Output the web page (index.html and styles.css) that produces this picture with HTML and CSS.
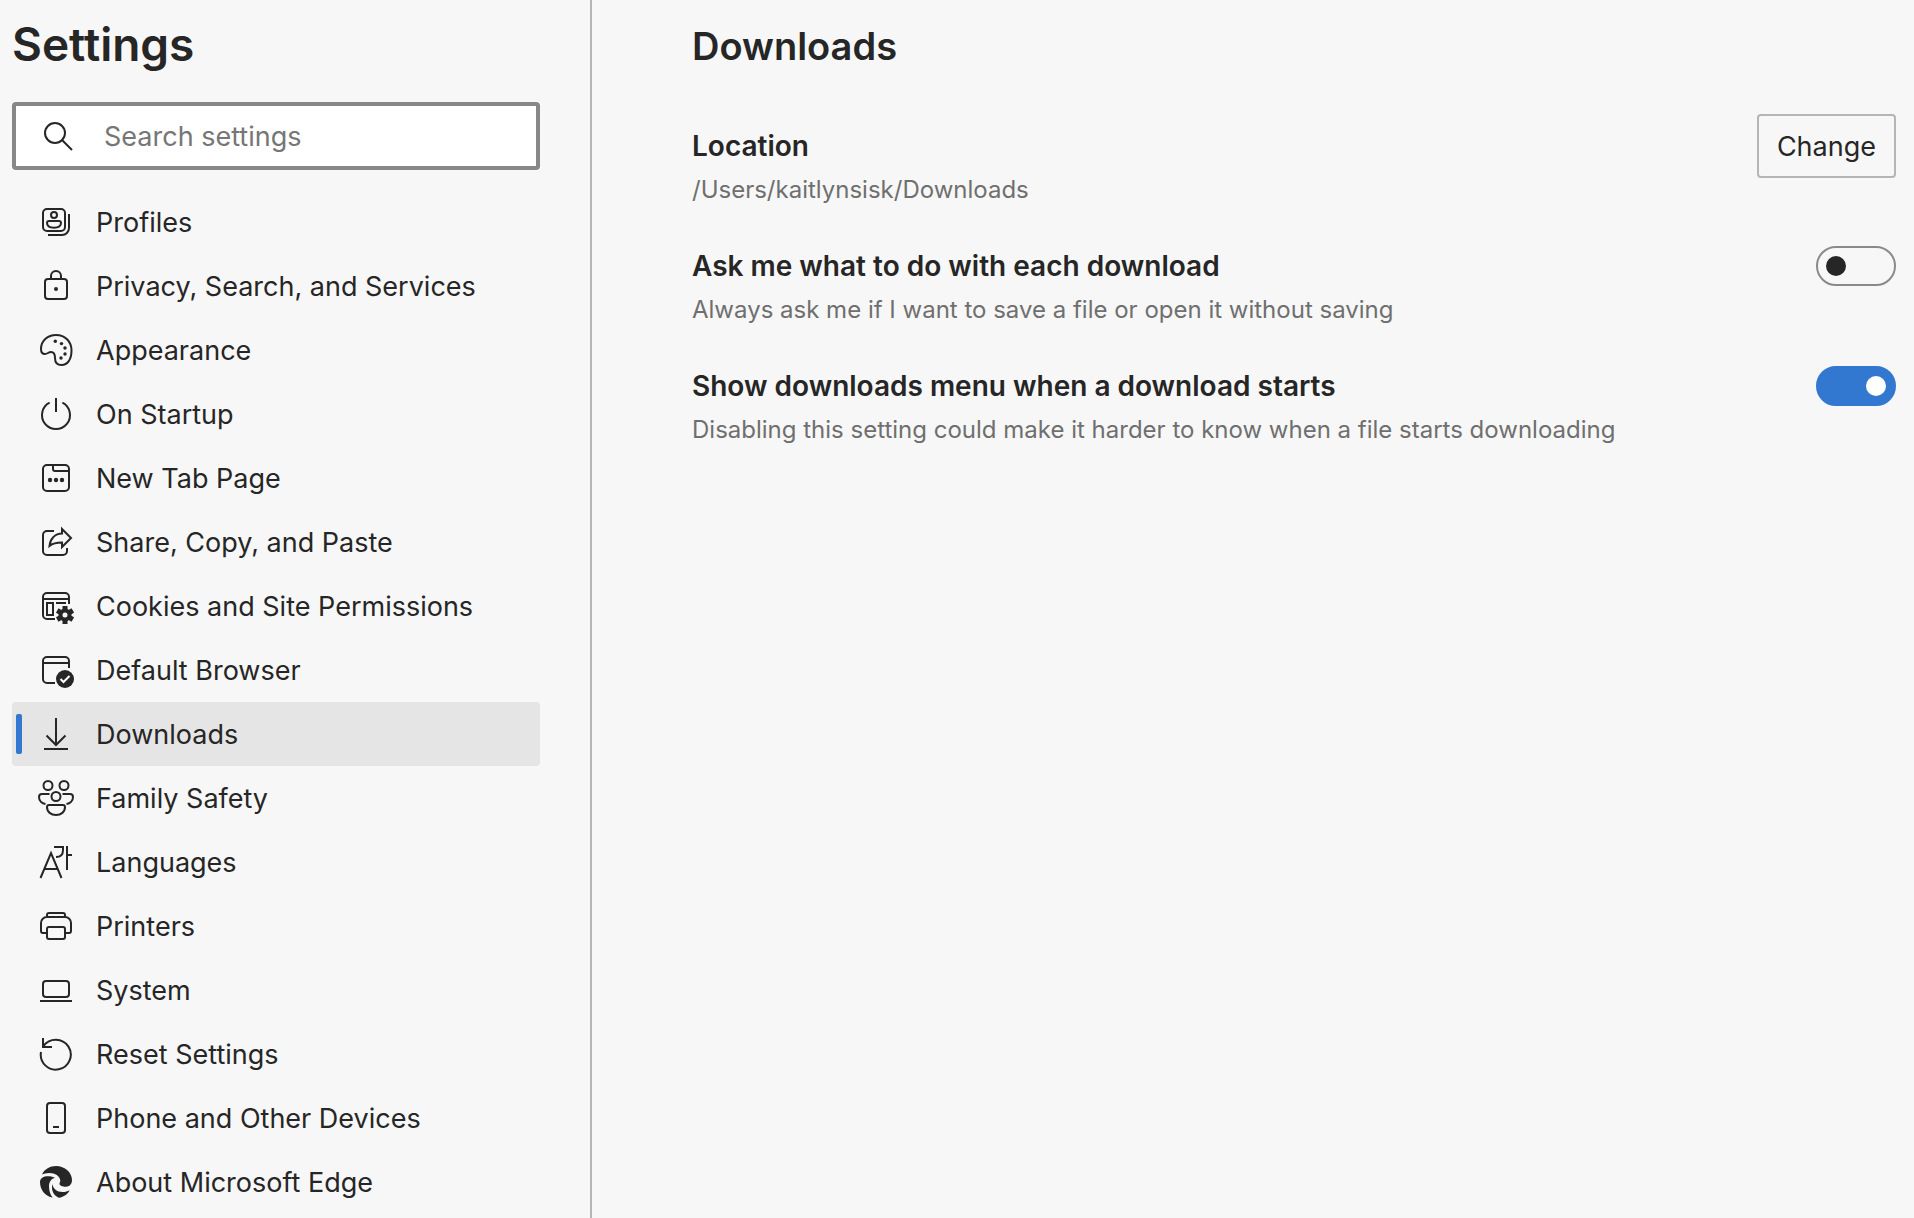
FILE: index.html
```html
<!DOCTYPE html>
<html lang="en">
<head>
    <meta charset="UTF-8">
    <meta name="viewport" content="width=device-width, initial-scale=1.0">
    <title>Settings</title>
    <link rel="stylesheet" href="styles.css">
</head>
<body>
    <div class="page">
        <aside class="sidebar">
            <h1>Settings</h1>

            <label class="search">
                <svg class="icon" viewBox="0 0 36 36"><circle cx="15" cy="15" r="10"/><path d="M22 22l10 10"/></svg>
                <input type="search" placeholder="Search settings" aria-label="Search settings">
            </label>

            <nav class="menu">
                <a href="#profiles">
                    <svg class="icon" viewBox="0 0 36 36"><rect x="5" y="5" width="22" height="22" rx="4"/><circle cx="16" cy="11" r="3"/><path d="M11 17h10a2 2 0 0 1 2 2c0 3-3 4.700-7 4.700s-7-1.700-7-4.700a2 2 0 0 1 2-2zM31 10v14a7 7 0 0 1-7 7H10"/></svg>
                    <span>Profiles</span>
                </a>
                <a href="#privacy">
                    <svg class="icon" viewBox="0 0 36 36"><rect x="7" y="11" width="22" height="20" rx="3"/><path d="M13 11V8a5 5 0 0 1 10 0v3"/><circle class="fill" cx="18" cy="21" r="2"/></svg>
                    <span>Privacy, Search, and Services</span>
                </a>
                <a href="#appearance">
                    <svg class="icon" viewBox="0 0 36 36"><path d="M3 17C3 8.500 10 3 18 3c9.500 0 15.500 7 15.500 15.500 0 9-4 14.500-10 14.500C18.500 33 17 29.500 17 26c0-4-1.500-6-4-6-2.500 0-3.500 2-6 2-2.500 0-4-2-4-5z"/><g class="fill"><circle cx="17.300" cy="9.300" r="1.700"/><circle cx="23.500" cy="11.600" r="1.700"/><circle cx="27" cy="16" r="1.700"/><circle cx="27" cy="22" r="1.700"/><circle cx="23" cy="26" r="1.700"/></g></svg>
                    <span>Appearance</span>
                </a>
                <a href="#startup">
                    <svg class="icon" viewBox="0 0 36 36"><path d="M18 2v14M11.600 6.600A14 14 0 1 0 24.400 6.600"/></svg>
                    <span>On Startup</span>
                </a>
                <a href="#newtab">
                    <svg class="icon" viewBox="0 0 36 36"><rect x="5" y="5" width="26" height="26" rx="4"/><path d="M15 5v4a2 2 0 0 0 2 2h14"/><g class="fill"><circle cx="12" cy="20" r="2.200"/><circle cx="18" cy="20" r="2.200"/><circle cx="24" cy="20" r="2.200"/></g></svg>
                    <span>New Tab Page</span>
                </a>
                <a href="#share">
                    <svg class="icon" viewBox="0 0 36 36"><path d="M16 7H9a4 4 0 0 0-4 4v16a4 4 0 0 0 4 4h16a4 4 0 0 0 4-4v-3"/><path d="M24 5l9 9-9 9v-4.500c-6 0-9 .5-12.500 3.500C12 15 17 9.500 24 9.500z"/></svg>
                    <span>Share, Copy, and Paste</span>
                </a>
                <a href="#cookies">
                    <svg class="icon" viewBox="0 0 36 36"><path d="M31 16V9a4 4 0 0 0-4-4H9a4 4 0 0 0-4 4v18a4 4 0 0 0 4 4h8M5 11h26M18 15h10"/><rect x="9" y="15" width="6" height="12"/><circle cx="27" cy="27" r="4.500" stroke-width="4"/><path class="teeth" d="M27 18v4M27 32v4M19.200 22.500l3.500 2M31.300 29.500l3.500 2M19.200 31.500l3.500-2M31.300 24.500l3.500-2"/></svg>
                    <span>Cookies and Site Permissions</span>
                </a>
                <a href="#default">
                    <svg class="icon" viewBox="0 0 36 36"><path d="M31 16V9a4 4 0 0 0-4-4H9a4 4 0 0 0-4 4v18a4 4 0 0 0 4 4h8M5 11h26"/><circle class="fill" cx="27" cy="27" r="9"/><path class="tick" d="M22.500 27l3 3 6-6"/></svg>
                    <span>Default Browser</span>
                </a>
                <a href="#downloads" class="active">
                    <svg class="icon" viewBox="0 0 36 36"><path d="M18 2v27M8.500 19.500l9.500 9.500 9.500-9.500M6 33h24"/></svg>
                    <span>Downloads</span>
                </a>
                <a href="#family">
                    <svg class="icon" viewBox="0 0 36 36"><circle cx="10" cy="5.500" r="4.500"/><circle cx="26" cy="5.500" r="4.500"/><circle cx="18" cy="16.500" r="4.500"/><path d="M11.500 14H4a3 3 0 0 0-3 3c0 4 3 6.500 6.500 7M24.500 14H32a3 3 0 0 1 3 3c0 4-3 6.500-6.500 7M11 25h14a2 2 0 0 1 2 2c0 5-4 8-9 8s-9-3-9-8a2 2 0 0 1 2-2z"/></svg>
                    <span>Family Safety</span>
                </a>
                <a href="#languages">
                    <svg class="icon" viewBox="0 0 36 36"><path d="M2.500 34L13 9l10.500 25M6 25h14M16 3h9v3c0 5-2.500 7-7 7M29 2v24M29 11h5"/></svg>
                    <span>Languages</span>
                </a>
                <a href="#printers">
                    <svg class="icon" viewBox="0 0 36 36"><path d="M9 25H5a2 2 0 0 1-2-2v-8a6 6 0 0 1 6-6h18a6 6 0 0 1 6 6v8a2 2 0 0 1-2 2h-4M9 9V7a2 2 0 0 1 2-2h14a2 2 0 0 1 2 2v2"/><rect x="9" y="19" width="18" height="12" rx="2"/></svg>
                    <span>Printers</span>
                </a>
                <a href="#system">
                    <svg class="icon" viewBox="0 0 36 36"><rect x="5" y="9" width="26" height="16" rx="3"/><path d="M2 29h32"/></svg>
                    <span>System</span>
                </a>
                <a href="#reset">
                    <svg class="icon" viewBox="0 0 36 36"><path d="M3 16A15 15 0 1 0 5.500 10M5 2v9h9"/></svg>
                    <span>Reset Settings</span>
                </a>
                <a href="#phone">
                    <svg class="icon" viewBox="0 0 36 36"><rect x="9" y="3" width="18" height="30" rx="3"/><path d="M15 27h6"/></svg>
                    <span>Phone and Other Devices</span>
                </a>
                <a href="#about">
                    <svg class="icon" viewBox="0 0 36 36"><path class="fill" d="M4 10.500C6.500 5 12 2 18 2c9 0 16 6.500 16 14 0 4-2.500 6.700-6 6.700-3.500 0-6.500-1.200-6.500-3 0-1 .8-1.500.8-3.200C22 12 17 9 11.500 9 8 9 5.500 9.800 4 10.500zM2 18c0-4 3.500-5.800 8-5.800 3 0 5.500.5 7 1.600-3.500.8-6 4-6 8.700 0 4.500 1.500 8.500 3.700 11.100C7.500 32.500 2 26 2 18zM14.200 20c1 4.500 4.500 8 10.300 8 3 0 5-.7 7.200-1.800-2 4-6 6.800-10.700 7.500-4.500-1.700-7-5.700-7-10.200 0-1.500 0-2.500.2-3.500z"/></svg>
                    <span>About Microsoft Edge</span>
                </a>
            </nav>
        </aside>

        <main class="content">
            <h2>Downloads</h2>

            <div class="setting">
                <div class="text">
                    <h3>Location</h3>
                    <p>/Users/kaitlynsisk/Downloads</p>
                </div>
                <button type="button" class="btn">Change</button>
            </div>

            <div class="setting">
                <div class="text">
                    <h3><label for="ask">Ask me what to do with each download</label></h3>
                    <p>Always ask me if I want to save a file or open it without saving</p>
                </div>
                <input type="checkbox" class="toggle" id="ask">
            </div>

            <div class="setting">
                <div class="text">
                    <h3><label for="show">Show downloads menu when a download starts</label></h3>
                    <p>Disabling this setting could make it harder to know when a file starts downloading</p>
                </div>
                <input type="checkbox" class="toggle" id="show" checked>
            </div>
        </main>
    </div>
</body>
</html>
```
FILE: styles.css
```css
* {
    margin: 0;
    padding: 0;
    box-sizing: border-box;
}
body {
    background-color: #f7f7f7;
    color: #262626;
    font-family: Inter, "Liberation Sans", sans-serif;
    font-size: 27px;
}
.page {
    display: flex;
    min-height: 100vh;
}
/* Left menu */
.sidebar {
    width: 592px;
    flex-shrink: 0;
    padding: 12px 50px 4px 12px;
    border-right: 2px solid #b5b5b5;
}
h1 {
    font-size: 46px;
    font-weight: 600;
    line-height: 64px;
}
.search {
    display: flex;
    align-items: center;
    height: 68px;
    margin: 26px 0 20px;
    padding-left: 24px;
    border: 4px solid #888;
    border-radius: 4px;
    background-color: white;
}
.search input {
    flex: 1;
    min-width: 0;
    margin-left: 28px;
    border: none;
    outline: none;
    background: none;
    font: inherit;
}
.search input::placeholder {
    color: #767676;
}
.icon {
    width: 36px;
    height: 36px;
    flex-shrink: 0;
    fill: none;
    stroke: #262626;
    stroke-width: 2;
}
.icon .fill {
    fill: #262626;
    stroke: none;
}
.icon .teeth {
    stroke-width: 5;
}
.icon .tick {
    stroke: white;
}
.menu a {
    display: flex;
    align-items: center;
    gap: 22px;
    height: 64px;
    padding-left: 26px;
    border-radius: 4px;
    color: inherit;
    text-decoration: none;
    white-space: nowrap;
}
.menu a:hover, .menu .active {
    background-color: #e5e5e5;
}
.menu .active {
    gap: 16px;
    padding-left: 4px;
}
.menu .active::before {
    content: "";
    width: 6px;
    height: 40px;
    border-radius: 2px;
    background-color: #3277d0;
}
.menu .active span {
    margin-left: 6px;
}
/* Right side */
.content {
    flex: 1;
    padding: 14px 18px 0 100px;
}
h2 {
    margin-bottom: 36px;
    font-size: 38px;
    font-weight: 600;
    line-height: 64px;
}
.setting {
    display: flex;
    justify-content: space-between;
    align-items: flex-start;
    padding-bottom: 32px;
}
h3 {
    font-size: 28px;
    font-weight: 600;
    line-height: 64px;
}
.text p {
    color: #6f6f6f;
    font-size: 24px;
    line-height: 24px;
}
.btn {
    height: 64px;
    padding: 0 18px;
    border: 2px solid #b5b5b5;
    border-radius: 4px;
    background: none;
    color: inherit;
    font: inherit;
    cursor: pointer;
}
.toggle {
    appearance: none;
    display: flex;
    align-items: center;
    width: 80px;
    height: 40px;
    margin: 12px 0;
    padding: 0 8px;
    border: 2px solid #8a8a8a;
    border-radius: 20px;
    cursor: pointer;
}
.toggle::before {
    content: "";
    width: 20px;
    height: 20px;
    border-radius: 50%;
    background-color: #262626;
}
.toggle:checked {
    justify-content: flex-end;
    border-color: #3277d0;
    background-color: #3277d0;
}
.toggle:checked::before {
    background-color: white;
}
```
